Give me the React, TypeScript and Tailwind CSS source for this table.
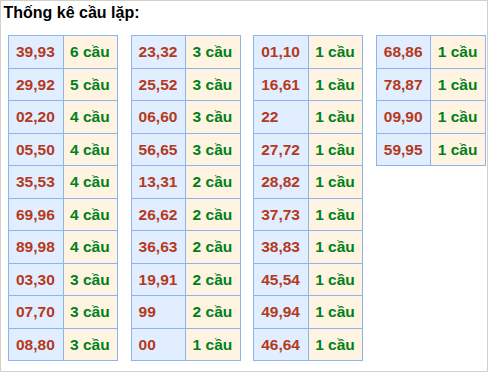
import React from "react";

const tables: [string, string][][] = [
  [
    ["39,93", "6 cầu"],
    ["29,92", "5 cầu"],
    ["02,20", "4 cầu"],
    ["05,50", "4 cầu"],
    ["35,53", "4 cầu"],
    ["69,96", "4 cầu"],
    ["89,98", "4 cầu"],
    ["03,30", "3 cầu"],
    ["07,70", "3 cầu"],
    ["08,80", "3 cầu"],
  ],
  [
    ["23,32", "3 cầu"],
    ["25,52", "3 cầu"],
    ["06,60", "3 cầu"],
    ["56,65", "3 cầu"],
    ["13,31", "2 cầu"],
    ["26,62", "2 cầu"],
    ["36,63", "2 cầu"],
    ["19,91", "2 cầu"],
    ["99", "2 cầu"],
    ["00", "1 cầu"],
  ],
  [
    ["01,10", "1 cầu"],
    ["16,61", "1 cầu"],
    ["22", "1 cầu"],
    ["27,72", "1 cầu"],
    ["28,82", "1 cầu"],
    ["37,73", "1 cầu"],
    ["38,83", "1 cầu"],
    ["45,54", "1 cầu"],
    ["49,94", "1 cầu"],
    ["46,64", "1 cầu"],
  ],
  [
    ["68,86", "1 cầu"],
    ["78,87", "1 cầu"],
    ["09,90", "1 cầu"],
    ["59,95", "1 cầu"],
  ],
];

export default function App() {
  return (
    <div
      className="w-[488px] h-[372px] border border-[#d4cfc4] bg-white"
      style={{ fontFamily: '"Liberation Sans", Arial, sans-serif' }}
    >
      <div className="pl-[2.5px] pt-[2px] text-[16px] leading-[19px] font-bold text-black">
        Thống kê cầu lặp:
      </div>
      <div className="flex items-start gap-[12.6px] pl-[7px] pt-[13px]">
        {tables.map((rows, ti) => (
          <div key={ti} className="w-[110px] border-t border-l border-[#8fb2f0]">
            {rows.map(([num, cnt], ri) => (
              <div key={ri} className="flex h-[32.5px]">
                <div className="w-[54.5px] h-full flex items-center pl-[7px] border-r border-b border-[#8fb2f0] bg-[#e1eeff] text-[15.5px] font-bold text-[#b5391c]">
                  {num}
                </div>
                <div className="w-[54.5px] h-full flex items-center pl-[6.5px] border-r border-b border-[#8fb2f0] bg-[#fff4e1] text-[15.5px] font-bold text-[#00801a]">
                  {cnt}
                </div>
              </div>
            ))}
          </div>
        ))}
      </div>
    </div>
  );
}
